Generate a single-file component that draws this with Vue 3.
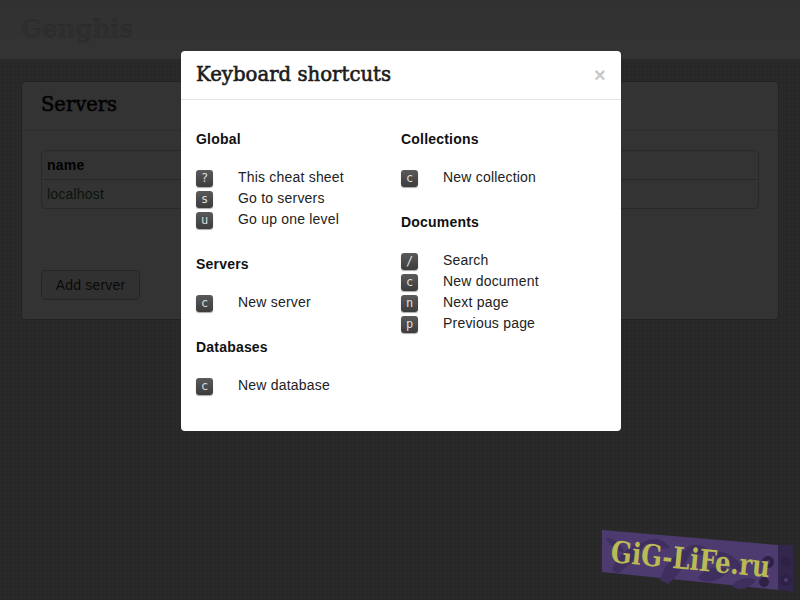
<script setup>
const left = [
  { title: 'Global', items: [['?', 'This cheat sheet'], ['s', 'Go to servers'], ['u', 'Go up one level']] },
  { title: 'Servers', items: [['c', 'New server']] },
  { title: 'Databases', items: [['c', 'New database']] },
]
const right = [
  { title: 'Collections', items: [['c', 'New collection']] },
  { title: 'Documents', items: [['/', 'Search'], ['c', 'New document'], ['n', 'Next page'], ['p', 'Previous page']] },
]
const columns = [left, right]
const leaves = [
  'M10 40 C14 28 28 14 44 12 C38 24 26 36 16 44 Z',
  'M42 12 C50 6 62 8 68 18 C58 20 48 18 42 12 Z',
  'M58 50 C62 34 74 22 90 18 C86 32 76 46 66 54 Z',
  'M84 18 C92 12 104 14 108 24 C100 26 90 24 84 18 Z',
  'M96 48 C102 38 116 34 126 40 C120 50 106 56 96 48 Z',
  'M112 22 C124 20 138 28 142 42 C130 40 118 32 112 22 Z',
  'M130 56 C136 48 146 46 154 50 C148 58 138 62 130 56 Z',
  'M4 8 C12 8 20 14 22 22 C14 22 8 16 4 8 Z',
]
const flowers = [
  { x: 166, y: 32, r: 6 },
  { x: 184, y: 32, r: 5 },
  { x: 184, y: 50, r: 6 },
  { x: 162, y: 52, r: 5 },
]
</script>

<template>
  <div class="page">
    <header class="topbar"><h1 class="brand">Genghis</h1></header>
    <section class="card">
      <div class="card-head"><h2>Servers</h2></div>
      <div class="card-body">
        <table class="tbl">
          <tbody>
            <tr><th>name</th></tr>
            <tr><td><a>localhost</a></td></tr>
          </tbody>
        </table>
        <button class="btn">Add server</button>
      </div>
    </section>

    <div class="overlay">
      <div class="modal">
        <div class="modal-head">
          <h3>Keyboard shortcuts</h3>
          <span class="close">×</span>
        </div>
        <div class="modal-body">
          <div v-for="(col, i) in columns" :key="i" class="col">
            <div v-for="sec in col" :key="sec.title" class="sec">
              <h4>{{ sec.title }}</h4>
              <div v-for="it in sec.items" :key="it[1]" class="row">
                <span class="key-cell"><kbd>{{ it[0] }}</kbd></span>
                <span>{{ it[1] }}</span>
              </div>
            </div>
          </div>
        </div>
      </div>
    </div>

    <svg class="stamp" width="198" height="68" viewBox="0 0 198 68">
      <polygon points="0,0 176,15 176,60 0,42" fill="#4d3b70" />
      <polygon points="176,15 191,15 191,62 176,60" fill="#33264c" />
      <g fill="#3e2f5e">
        <path v-for="d in leaves" :key="d" :d="d" />
      </g>
      <g fill="#2d2145">
        <circle v-for="f in flowers" :key="f.x" :cx="f.x" :cy="f.y" :r="f.r" />
      </g>
      <g fill="#4d3b70">
        <circle cx="166" cy="32" r="2" />
        <circle cx="184" cy="50" r="2" />
      </g>
      <text class="stamp-text" transform="translate(8 32) rotate(5.5) scale(0.82 1)">GiG-LiFe.ru</text>
    </svg>
  </div>
</template>

<style>
html, body { margin: 0; background: #c8c8c8; }
</style>

<style scoped>
.page {
  position: relative;
  width: 800px;
  height: 600px;
  overflow: hidden;
  background-color: #c8c8c8;
  background-image: radial-gradient(circle at 1px 1px, #d4d4d4 1px, transparent 1px);
  background-size: 4px 4px;
  font-family: "Liberation Sans", Arial, sans-serif;
  font-size: 14px;
  letter-spacing: 0.2px;
  color: #333;
}
.topbar {
  height: 60px;
  box-sizing: border-box;
  background: linear-gradient(#f6f6f6, #fff);
  border-bottom: 1px solid #d0d0d0;
  padding: 0 21px;
}
.brand {
  margin: 0;
  font: bold 24.5px/60px "DejaVu Serif", serif;
  letter-spacing: 0;
  color: #e4e4e4;
  text-shadow: 0 -1px 0 #ccc;
}
.card {
  margin: 21px 21px 0;
  height: 239px;
  box-sizing: border-box;
  background: #fff;
  border: 1px solid #aaa;
  border-radius: 4px;
}
.card-head {
  height: 49px;
  box-sizing: border-box;
  padding: 0 19px;
  border-bottom: 1px solid #ddd;
}
.card-head h2 {
  margin: 0;
  font: 500 19.5px/45px "DejaVu Serif", serif;
  letter-spacing: 0;
  -webkit-text-stroke: 0.6px #111;
  color: #111;
}
.card-body { padding: 20px 19px 0; }
.tbl {
  width: 100%;
  border: 1px solid #ccc;
  border-radius: 4px;
  border-collapse: separate;
  border-spacing: 0;
  margin-top: -1px;
}
.tbl th, .tbl td {
  text-align: left;
  padding: 0 5px;
  height: 28px;
  line-height: 20px;
}
.tbl th { color: #000; border-bottom: 1px solid #ccc; }
.tbl a { color: #2f6b2f; }
.btn {
  display: block;
  margin-top: 61px;
  width: 99px;
  height: 30px;
  background: #f2f2f2;
  border: 1px solid #bbb;
  border-radius: 4px;
  font: 14px "Liberation Sans", Arial, sans-serif;
  letter-spacing: 0.2px;
  color: #333;
  padding: 0;
}
.overlay {
  position: absolute;
  inset: 0;
  background: rgba(0, 0, 0, 0.8);
  display: flex;
  justify-content: center;
  align-items: flex-start;
  padding: 51px 0 0 2px;
}
.modal {
  width: 440px;
  height: 380px;
  background: #fff;
  border-radius: 4px;
  color: #222;
}
.modal-head {
  height: 49px;
  box-sizing: border-box;
  padding: 0 15px;
  border-bottom: 1px solid #e5e5e5;
  display: flex;
  align-items: center;
  justify-content: space-between;
}
.modal-head h3 {
  margin: 0;
  font: 500 19.7px/46px "DejaVu Serif", serif;
  letter-spacing: 0;
  -webkit-text-stroke: 0.6px #1c1c1c;
  color: #1c1c1c;
}
.close {
  font-size: 20px;
  font-weight: bold;
  color: #c8c8c8;
  line-height: 46px;
}
.modal-body {
  display: flex;
  padding: 29px 15px 0;
}
.col { width: 205px; }
.sec { margin-bottom: 24px; }
.sec h4 {
  margin: 0 0 17px;
  font-size: 14px;
  line-height: 21px;
  color: #111;
}
.row {
  display: flex;
  line-height: 21px;
  height: 21px;
}
.key-cell { width: 42px; display: flex; align-items: center; }
kbd {
  width: 17px;
  height: 17px;
  margin-top: 2px;
  border-radius: 3px;
  background: linear-gradient(#5a5a5a, #3c3c3c);
  box-shadow: 0 1px 1px #aaa;
  color: #ddd;
  font: 12px/17px "DejaVu Sans Mono", monospace;
  letter-spacing: 0;
  text-align: center;
}
.stamp {
  position: absolute;
  left: 602px;
  top: 530px;
}
.stamp-text {
  font: bold 30px "DejaVu Serif", serif;
  letter-spacing: 0;
  fill: #b9b956;
}
</style>
